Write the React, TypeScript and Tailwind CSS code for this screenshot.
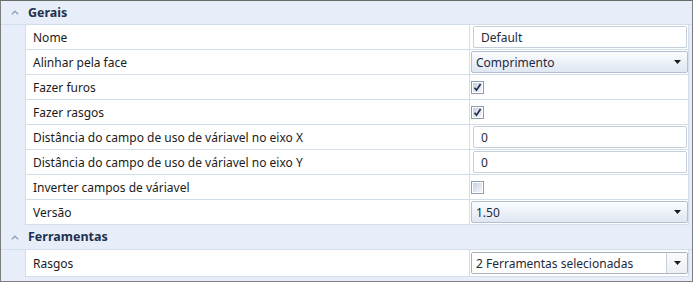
import React from "react";

type Row =
  | { label: string; kind: "text"; value: string }
  | { label: string; kind: "combo"; value: string }
  | { label: string; kind: "check"; checked: boolean }
  | { label: string; kind: "multi"; value: string };

const gerais: Row[] = [
  { label: "Nome", kind: "text", value: "Default" },
  { label: "Alinhar pela face", kind: "combo", value: "Comprimento" },
  { label: "Fazer furos", kind: "check", checked: true },
  { label: "Fazer rasgos", kind: "check", checked: true },
  { label: "Distância do campo de uso de váriavel no eixo X", kind: "text", value: "0" },
  { label: "Distância do campo de uso de váriavel no eixo Y", kind: "text", value: "0" },
  { label: "Inverter campos de váriavel", kind: "check", checked: false },
  { label: "Versão", kind: "combo", value: "1.50" },
];

const ferramentas: Row[] = [{ label: "Rasgos", kind: "multi", value: "2 Ferramentas selecionadas" }];

function Caret() {
  return (
    <svg width="7" height="4" viewBox="0 0 7 4" className="shrink-0">
      <path d="M0 0h7L3.5 4z" fill="#1b1b1b" />
    </svg>
  );
}

function Checkbox({ checked }: { checked: boolean }) {
  return (
    <div className="w-[13px] h-[13px] border border-[#8e9cb4] bg-white p-[1px] ml-[1px]">
      <div className="relative w-full h-full bg-gradient-to-br from-[#c6d1e2] to-[#f4f7fb]">
        {checked && (
          <svg width="9" height="9" viewBox="0 0 9 9" className="absolute left-0 top-0">
            <path d="M1.5 4.8l2 2.4L7.6 1" fill="none" stroke="#1f2f4f" strokeWidth="1.7" />
          </svg>
        )}
      </div>
    </div>
  );
}

function Value({ row }: { row: Row }) {
  if (row.kind === "text") {
    return (
      <div className="h-[22px] ml-[3px] mr-[1px] flex items-center border border-[#c5cfdb] rounded-[2px] bg-white px-[7px] pt-[1px] text-[#1e2a3c]">
        {row.value}
      </div>
    );
  }
  if (row.kind === "combo") {
    return (
      <div className="h-[22px] ml-[1px] flex items-center justify-between border border-[#b3c0d3] rounded-[2px] bg-gradient-to-b from-[#fbfcfe] to-[#dfe7f2] pl-[4px] pr-[6px] text-[#1e2a3c]">
        <span className="pt-[1px]">{row.value}</span>
        <Caret />
      </div>
    );
  }
  if (row.kind === "multi") {
    return (
      <div className="h-[22px] ml-[1px] flex items-stretch border border-[#a9b2bf] rounded-[2px] bg-white text-[#1e2a3c]">
        <span className="flex-1 flex items-center pl-[4px] pt-[1px]">{row.value}</span>
        <span className="w-[21px] flex items-center justify-center border-l border-[#c9d0da] bg-gradient-to-b from-[#fafbfc] to-[#eceff3]">
          <Caret />
        </span>
      </div>
    );
  }
  return <Checkbox checked={row.checked} />;
}

function Category({
  title,
  rows,
  headH,
  lastH,
}: {
  title: string;
  rows: Row[];
  headH: string;
  lastH?: string;
}) {
  return (
    <div>
      <div className={`${headH} flex items-center border-b border-[#d3deeb]`}>
        <span className="w-[27px] flex justify-center">
          <svg width="8" height="5" viewBox="0 0 8 5">
            <path d="M0.8 4.3L4 1.2l3.2 3.1" fill="none" stroke="#8aa0bd" strokeWidth="1.2" />
          </svg>
        </span>
        <span className="font-bold text-[#1e3150] text-[12.5px] pt-[1px]">{title}</span>
      </div>
      {rows.map((row, i) => (
        <div
          key={row.label}
          className={`ml-[24px] mr-[3px] ${i === rows.length - 1 && lastH ? lastH : "h-[25px]"} flex bg-white border-l border-r border-b border-[#d3deeb]`}
        >
          <div className="w-[444px] shrink-0 flex items-center pl-[7px] pt-[2px] border-r border-[#d3deeb] text-[#1b1b1b]">
            {row.label}
          </div>
          <div className="flex-1 flex items-center">
            <div className="flex-1">
              <Value row={row} />
            </div>
          </div>
        </div>
      ))}
    </div>
  );
}

export default function App() {
  return (
    <div
      className="w-[693px] h-[282px] overflow-hidden bg-[#e8eef9] border border-[#7d7d7d] border-t-[#6b6b6b] text-[12px] leading-none"
      style={{ fontFamily: "'Noto Sans', 'Open Sans', sans-serif" }}
    >
      <Category title="Gerais" rows={gerais} headH="h-[24px]" />
      <Category title="Ferramentas" rows={ferramentas} headH="h-[25px]" lastH="h-[27px]" />
    </div>
  );
}
